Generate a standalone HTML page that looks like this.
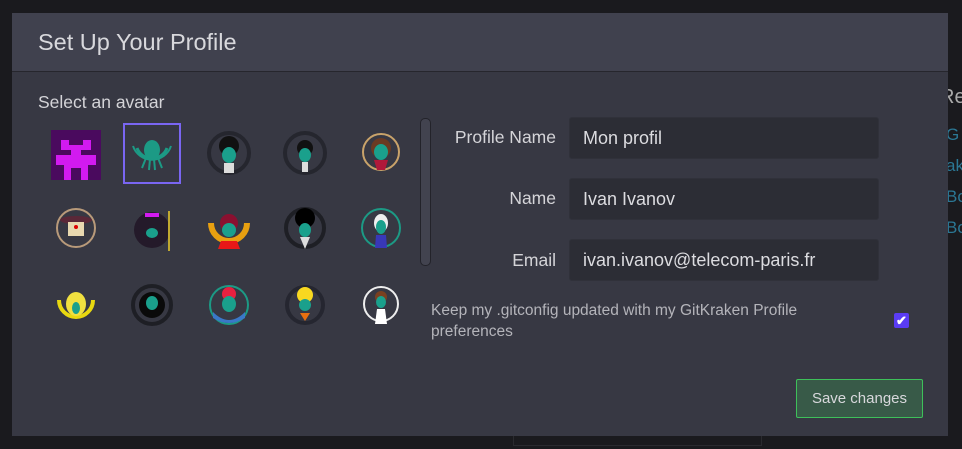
<!DOCTYPE html>
<html><head><style>
body{margin:0;width:962px;height:449px;background:#1a1a1e;font-family:"Liberation Sans",sans-serif;position:relative;overflow:hidden}
.bg{position:absolute;font-size:17px;color:#2b7794}
.modal{position:absolute;left:12px;top:13px;width:936px;height:423px;background:#373843}
.hdr{height:58px;background:#40414e;border-bottom:1px solid #26262d}
.hdr span{position:absolute;left:26px;top:16px;font-size:23.5px;color:#d8d8dc}
.sel{position:absolute;left:26px;top:79px;font-size:17.5px;color:#d4d4d8}
.av{position:absolute;width:50px;height:50px}
.lbl{position:absolute;font-size:17.5px;color:#d4d4d8;text-align:right;width:160px}
.inp{position:absolute;left:557px;width:310px;height:42px;background:#2c2d35;border:1px solid #30313a;border-radius:3px;box-sizing:border-box;font-size:18px;color:#dcdce0;padding:10px 0 0 13px}
</style></head><body>
<div class="bg" style="left:940px;top:86px;color:#aaa;font-size:20px">Re</div>
<div class="bg" style="left:946px;top:125px">G</div>
<div class="bg" style="left:946px;top:156px">ak</div>
<div class="bg" style="left:946px;top:187px">Bo</div>
<div class="bg" style="left:946px;top:218px">Bo</div>
<div style="position:absolute;left:513px;top:436px;width:247px;height:9px;border:1px solid #2a2a2f;border-top:none"></div>
<div class="modal">
<div class="hdr"><span>Set Up Your Profile</span></div>
<div class="sel">Select an avatar</div>
<svg class="av" style="left:39px;top:117px" viewBox="0 0 50 50"><rect width="50" height="50" fill="#4a0a5e"/><path d="M10 10h8v5h14v-5h8v10h-10v5h-10v-5h-10z M5 25h40v10h-8v15h-7v-12h-10v12h-7v-15h-8z" fill="#d21af0"/></svg>
<div style="position:absolute;left:111px;top:110px;width:58px;height:61px;border:2px solid #7a66f2;box-sizing:border-box"></div>
<svg class="av" style="left:115px;top:115px" viewBox="0 0 50 50"><path d="M10 20a16 16 0 0 0 30 0" stroke="#1c9a85" stroke-width="3" fill="none"/><path d="M6 18a20 20 0 0 0 38 0" stroke="#1c9a85" stroke-width="2" fill="none"/><ellipse cx="25" cy="22" rx="8" ry="10" fill="#1c9a85"/><path d="M19 30l-4 10M23 31l-1 11M27 31l1 11M31 30l4 10" stroke="#1c9a85" stroke-width="2"/></svg>
<svg class="av" style="left:192px;top:115px" viewBox="0 0 50 50"><circle cx="25" cy="25" r="20" stroke="#25262e" stroke-width="4" fill="none"/><circle cx="25" cy="18" r="10" fill="#111"/><ellipse cx="25" cy="27" rx="7" ry="8" fill="#1aa08c"/><rect x="20" y="35" width="10" height="10" fill="#ddd"/></svg>
<svg class="av" style="left:268px;top:115px" viewBox="0 0 50 50"><circle cx="25" cy="25" r="20" stroke="#25262e" stroke-width="4" fill="none"/><circle cx="25" cy="20" r="8" fill="#111"/><ellipse cx="25" cy="27" rx="6" ry="7" fill="#1aa08c"/><rect x="22" y="34" width="6" height="10" fill="#ddd"/></svg>
<svg class="av" style="left:344px;top:115px" viewBox="0 0 50 50"><circle cx="25" cy="24" r="18" stroke="#c9a36a" stroke-width="2" fill="none"/><circle cx="25" cy="20" r="10" fill="#6a3a22"/><ellipse cx="25" cy="24" rx="7" ry="8" fill="#1aa08c"/><path d="M18 32h14l-3 10h-8z" fill="#b0183a"/></svg>
<svg class="av" style="left:39px;top:190px" viewBox="0 0 50 50"><circle cx="25" cy="25" r="19" stroke="#b89a7a" stroke-width="2" fill="none"/><ellipse cx="25" cy="17" rx="16" ry="4" fill="#5a2838"/><rect x="17" y="19" width="16" height="14" fill="#e8d8b0"/><circle cx="25" cy="24" r="2" fill="#d00"/></svg>
<svg class="av" style="left:115px;top:190px" viewBox="0 0 50 50"><circle cx="25" cy="27" r="18" fill="#241a2a"/><ellipse cx="25" cy="30" rx="6" ry="5" fill="#1aa08c"/><rect x="18" y="10" width="14" height="4" fill="#d21af0"/><path d="M42 8v40" stroke="#c0a830" stroke-width="2"/></svg>
<svg class="av" style="left:192px;top:190px" viewBox="0 0 50 50"><path d="M7 20a18 18 0 0 0 36 0" stroke="#e8a010" stroke-width="6" fill="none"/><circle cx="25" cy="20" r="9" fill="#8a1030"/><ellipse cx="25" cy="27" rx="7" ry="7" fill="#1aa08c"/><path d="M17 38h16l3 8h-22z" fill="#e81818"/></svg>
<svg class="av" style="left:268px;top:190px" viewBox="0 0 50 50"><circle cx="25" cy="25" r="19" stroke="#1e1f25" stroke-width="4" fill="none"/><circle cx="25" cy="15" r="10" fill="#000"/><ellipse cx="25" cy="27" rx="6" ry="7" fill="#1aa08c"/><path d="M20 34h10l-5 12z" fill="#ddd"/></svg>
<svg class="av" style="left:344px;top:190px" viewBox="0 0 50 50"><circle cx="25" cy="25" r="19" stroke="#1c9a85" stroke-width="2" fill="none"/><ellipse cx="25" cy="20" rx="7" ry="9" fill="#eee"/><ellipse cx="25" cy="24" rx="5" ry="7" fill="#1aa08c"/><path d="M20 32h10l1 13h-12z" fill="#3838b8"/></svg>
<svg class="av" style="left:39px;top:267px" viewBox="0 0 50 50"><path d="M8 20a17 17 0 0 0 34 0" stroke="#e8d810" stroke-width="4" fill="none"/><ellipse cx="25" cy="24" rx="10" ry="12" fill="#f0e040"/><ellipse cx="25" cy="28" rx="4" ry="6" fill="#1aa08c"/></svg>
<svg class="av" style="left:115px;top:267px" viewBox="0 0 50 50"><circle cx="25" cy="25" r="19" stroke="#1e1f25" stroke-width="4" fill="none"/><circle cx="25" cy="25" r="13" fill="#0a0a0a"/><ellipse cx="25" cy="23" rx="6" ry="7" fill="#1aa08c"/></svg>
<svg class="av" style="left:192px;top:267px" viewBox="0 0 50 50"><circle cx="25" cy="25" r="19" stroke="#1c9a85" stroke-width="2" fill="none"/><circle cx="25" cy="14" r="7" fill="#e82040"/><ellipse cx="25" cy="24" rx="7" ry="8" fill="#1aa08c"/><path d="M9 32q16 16 32 0v6q-16 10-32 0z" fill="#3a78c8"/></svg>
<svg class="av" style="left:268px;top:267px" viewBox="0 0 50 50"><circle cx="25" cy="25" r="18" stroke="#252630" stroke-width="4" fill="none"/><circle cx="25" cy="15" r="8" fill="#f8d820"/><ellipse cx="25" cy="25" rx="6" ry="6" fill="#1aa08c"/><path d="M20 33h10l-5 8z" fill="#e87010"/></svg>
<svg class="av" style="left:344px;top:267px" viewBox="0 0 50 50"><circle cx="25" cy="24" r="17" stroke="#eee" stroke-width="2" fill="none"/><circle cx="25" cy="17" r="6" fill="#7a4020"/><ellipse cx="25" cy="22" rx="5" ry="6" fill="#1aa08c"/><path d="M21 29h8l2 15h-12z" fill="#fff"/></svg>
<div style="position:absolute;left:408px;top:105px;width:9px;height:146px;border:1px solid #23232a;border-radius:5px;background:#42434f"></div>
<div class="lbl" style="left:384px;top:114px">Profile Name</div>
<div class="lbl" style="left:384px;top:175px">Name</div>
<div class="lbl" style="left:384px;top:237px">Email</div>
<div class="inp" style="top:104px">Mon profil</div>
<div class="inp" style="top:165px">Ivan Ivanov</div>
<div class="inp" style="top:226px">ivan.ivanov@telecom-paris.fr</div>
<div style="position:absolute;left:419px;top:287px;width:440px;font-size:15.5px;line-height:21px;color:#b4b4ba">Keep my .gitconfig updated with my GitKraken Profile preferences</div>
<div style="position:absolute;left:882px;top:300px;width:15px;height:15px;background:#5a3cf4;border-radius:2px;color:#fff;font-size:13px;line-height:15px;text-align:center;font-weight:bold">✔</div>
<div style="position:absolute;left:784px;top:366px;width:127px;height:39px;box-sizing:border-box;background:#385a48;border:1px solid #3ec05a;border-radius:2px;color:#d8d8dc;font-size:15px;text-align:center;line-height:37px">Save changes</div>
</div>
</body></html>
